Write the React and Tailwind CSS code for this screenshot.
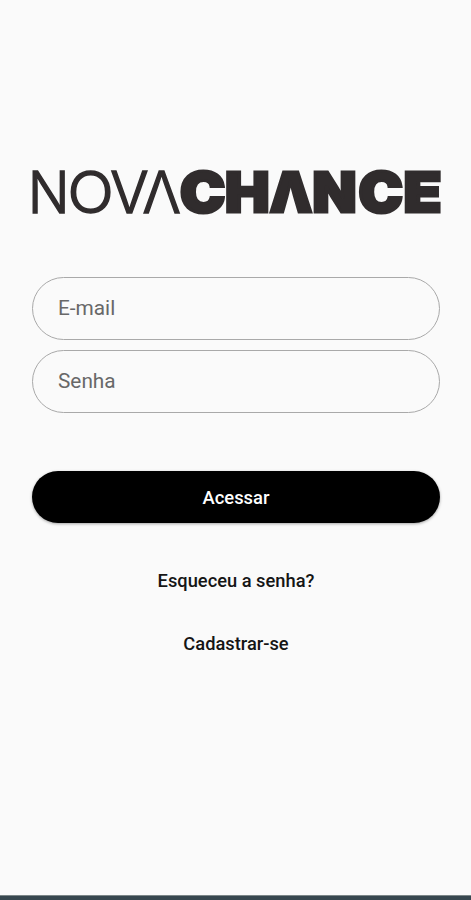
import React, { useState } from 'react';

// each letter: glyph, left edge, horizontal scale
const light = [
    { char: 'N', x: -4, sx: 0.94 },
    { char: 'O', x: 35.5, sx: 1.05 },
    { char: 'V', x: 78.2, sx: 0.98 },
    { char: 'Λ', x: 110.5, sx: 0.98 },
];

const heavy = [
    { char: 'C', x: 148, sx: 1.09 },
    { char: 'H', x: 193, sx: 1.07 },
    { char: 'Λ', x: 237.8, sx: 0.96 },
    { char: 'N', x: 280.5, sx: 1.03 },
    { char: 'C', x: 326.5, sx: 1.07 },
    { char: 'E', x: 371.4, sx: 1.12 },
];

function Logo() {
    return (
        <svg className="block h-[46px] w-[408px] overflow-visible fill-[#302c2d] stroke-[#302c2d] font-['Inter',sans-serif]" viewBox="0 0 408 46">
            {light.map((l, i) => (
                <text key={i} transform={`translate(${l.x} 44.6) scale(${l.sx} 1)`} strokeWidth="1.5" className="text-[58px] font-light">{l.char}</text>
            ))}
            {heavy.map((l, i) => (
                <text key={i} transform={`translate(${l.x} 44.1) scale(${l.sx} 1)`} strokeWidth="3" className="text-[55.5px] font-black">{l.char}</text>
            ))}
        </svg>
    );
}

export default function App() {
    const [email, setEmail] = useState('');
    const [senha, setSenha] = useState('');

    return (
        <div className="flex h-[900px] w-full flex-col bg-[#fafafa] font-['Roboto',sans-serif]">
            <form className="flex flex-1 flex-col px-8 pt-[168px]" onSubmit={(e) => e.preventDefault()}>
                <Logo />
                <input
                    type="email"
                    placeholder="E-mail"
                    className="mt-[63px] h-[63px] w-[408px] rounded-full border border-[#a9a9a9] bg-transparent px-[25px] pb-px text-[20.8px] text-black outline-none placeholder:text-[#686868]"
                    value={email}
                    onChange={(e) => setEmail(e.target.value)}
                />
                <input
                    type="password"
                    placeholder="Senha"
                    className="mt-[10px] h-[63px] w-[408px] rounded-full border border-[#a9a9a9] bg-transparent px-[25px] pb-px text-[20.8px] text-black outline-none placeholder:text-[#686868]"
                    value={senha}
                    onChange={(e) => setSenha(e.target.value)}
                />
                <button
                    type="submit"
                    className="mt-[58px] h-[52px] w-[408px] rounded-full bg-black pt-px text-[18.4px] font-medium text-white shadow-[0_1px_3px_rgba(0,0,0,0.35)]"
                >
                    Acessar
                </button>
                <button type="button" className="mt-[44px] h-7 w-[408px] text-[18.3px] font-medium text-[#151515]">
                    Esqueceu a senha?
                </button>
                <button type="button" className="mt-[35px] h-7 w-[408px] text-[18.3px] font-medium text-[#151515]">
                    Cadastrar-se
                </button>
            </form>
            <div className="h-[5px] border-t border-[#7b8587] bg-[#37474f]" />
        </div>
    );
}
